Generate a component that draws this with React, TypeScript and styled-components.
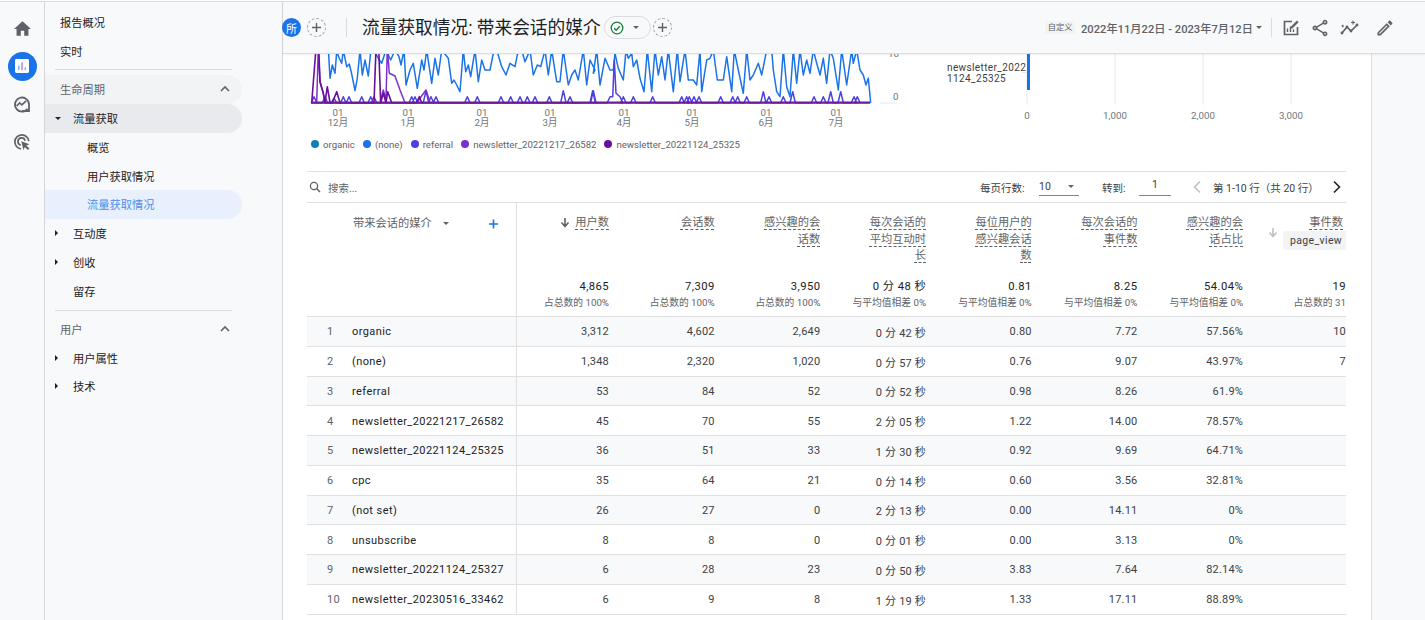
import React from "react";
import styled, { createGlobalStyle } from "styled-components";

const FONT = `Roboto, "Noto Sans CJK SC", "Noto Sans", sans-serif`;

const Global = createGlobalStyle`
  html, body { margin: 0; padding: 0; background: #fff; overflow: hidden; }
  * { box-sizing: border-box; }
  body { font-family: ${FONT}; color: #3c4043; }
`;

const Page = styled.div`
  width: 1425px; height: 620px; padding-top: 1px; overflow: hidden;
`;
const Frame = styled.div`
  display: flex; height: 619px; border-top: 1px solid #dadce0; background: #f8f9fa;
`;
const Rail = styled.aside`
  width: 45px; flex: none; border-right: 1px solid #d4d6da;
  display: flex; flex-direction: column; align-items: center; padding: 9px 0 0 0; gap: 4px;
`;
const RailButton = styled.div<{ $active?: boolean }>`
  width: 30px; height: 34px; display: flex; align-items: center; justify-content: center; 
  & > span { width: 29px; height: 29px; border-radius: 50%; display: flex; align-items: center; justify-content: center;
    background: ${p => (p.$active ? "#1a73e8" : "transparent")}; }
`;
const Nav = styled.nav`
  width: 238px; flex: none; border-right: 1px solid #d4d6da; padding-top: 5.6px;
`;
const NavRow = styled.div<{ $indent: number; $tone?: "group" | "open" | "active"; $sub?: boolean }>`
  width: 197px; height: 28.75px; display: flex; align-items: center;
  padding-left: ${p => p.$indent}px; padding-right: 11px;
  font-size: 11.25px; letter-spacing: 0;
  color: ${p => (p.$tone === "active" ? "#4d8fe8" : p.$sub ? "#5f6368" : "#202124")};
  background: ${p => p.$tone === "group" ? "#f1f3f4" : p.$tone === "open" ? "#e8eaed" : p.$tone === "active" ? "#e8f0fe" : "transparent"};
  border-radius: ${p => (p.$tone ? "0 15px 15px 0" : "0")};
`;
const CaretBox = styled.span`
  width: 20px; flex: none; display: flex; align-items: center; padding-left: 2px;
`;
const CaretDown = styled.i`
  width: 0; height: 0; border-left: 3px solid transparent; border-right: 3px solid transparent; border-top: 3px solid #202124;
`;
const CaretRight = styled.i`
  width: 0; height: 0; border-top: 3.5px solid transparent; border-bottom: 3.5px solid transparent; border-left: 3.5px solid #202124;
`;
const NavRule = styled.div<{ $gap: number; $top: number }>`
  width: 177px; height: 1px; background: #dadce0; margin: ${p => p.$top}px 0 ${p => p.$gap}px 10px;
`;
const Push = styled.span` margin-left: auto; display: flex; `;

const Main = styled.main`
  flex: 1; min-width: 0; display: flex; flex-direction: column;
`;
const Header = styled.header`
  height: 52px; flex: none; display: flex; align-items: center; background: #f8f9fa;
  border-bottom: 1px solid #dadce0; padding: 0 17px 0 0; box-shadow: 0 1px 2px rgba(60,64,67,.08);
  position: relative; z-index: 2;
`;
const Avatar = styled.span`
  width: 19px; height: 19px; border-radius: 50%; background: #1a73e8; color: #fff; font-size: 11px; margin-left: -1px;
  display: flex; align-items: center; justify-content: center; flex: none;
`;
const AddChip = styled.span<{ $left: number }>`
  width: 19px; height: 19px; border-radius: 50%; border: 1px dashed #9aa0a6; margin-left: ${p => p.$left}px; flex: none;
  display: flex; align-items: center; justify-content: center; color: #5f6368;
`;
const VRule = styled.span<{ $left: number; $right: number }>`
  width: 1px; height: 19px; background: #dadce0; flex: none; margin: 0 ${p => p.$right}px 0 ${p => p.$left}px;
`;
const Title = styled.h1`
  font-size: 17.7px; font-weight: 400; margin: 0; color: #202124; white-space: nowrap; line-height: 24px; width: 241px;
`;
const StatusPill = styled.span`
  width: 47px; height: 23px; border: 1px solid #dadce0; border-radius: 12px; margin-left: 1px; flex: none;
  display: flex; align-items: center; padding-left: 5px; gap: 9px;
`;
const TinyCaret = styled.i<{ $c?: string }>`
  width: 0; height: 0; border-left: 3px solid transparent; border-right: 3px solid transparent; border-top: 3px solid ${p => p.$c || "#5f6368"}; flex: none;
`;
const RangeTag = styled.span`
  margin-left: auto; font-size: 8.25px; color: #5f6368; background: #f1f3f4; height: 13px; line-height: 13px; width: 30px; white-space: nowrap; text-align: center;
`;
const DateText = styled.span`
  font-size: 11.2px; font-weight: 500; color: #5f6368; margin: 0 4px 0 6px; white-space: nowrap; width: 171px;
`;
const HeadIcon = styled.span<{ $w: number }>`
  width: ${p => p.$w}px; flex: none; display: flex; justify-content: center; align-items: center; color: #5f6368;
`;

const ContentRow = styled.div`
  flex: 1; min-height: 0; display: flex;
`;
const Body = styled.section`
  width: 1088px; flex: none; background: #fff; padding: 0 25px 0 24px; overflow: hidden;
`;
const Gutter = styled.div`
  flex: 1; border-left: 1px solid #dadce0; background: #f8f9fa;
`;
const ChartSvg = styled.svg`
  display: block; margin-left: -24px; width: 1088px; height: 81px;
`;
const Legend = styled.div`
  display: flex; align-items: center; height: 18px; padding-left: 4px; margin-bottom: 18px;
`;
const LegendItem = styled.span`
  display: flex; align-items: center; font-size: 9.6px; color: #5f6368; margin-right: 8px; white-space: nowrap;
`;
const LegendDot = styled.i<{ $c: string }>`
  width: 8px; height: 8px; border-radius: 50%; background: ${p => p.$c}; margin-right: 4px; flex: none;
`;
const Toolbar = styled.div`
  height: 32px; border-top: 1px solid #e0e0e0; border-bottom: 1px solid #e0e0e0; display: flex; align-items: center; font-size: 10.5px; color: #5f6368;
`;
const SearchIcon = styled.span` display: flex; margin: 0 7px 0 2px; `;
const ToolLabel = styled.span<{ $left?: number; $w?: number }>`
  margin-left: ${p => p.$left ?? 0}px; white-space: nowrap; color: #3c4043; ${p => (p.$w ? `width:${p.$w}px;` : "")}
`;
const SearchLabel = styled.span`
  width: 30px; white-space: nowrap; color: #5f6368;
`;
const PageSelect = styled.span`
  width: 40px; height: 18px; margin-left: 14px; border-bottom: 1px solid #80868b; display: flex; align-items: center; justify-content: space-between; padding: 0 5px 0 0; font-size: 10.5px; color: #3c4043;
`;
const GoInput = styled.span`
  width: 32px; height: 18px; margin-left: 12px; border-bottom: 1px solid #80868b; text-align: center; font-size: 10.5px; line-height: 14px; color: #3c4043;
`;
const ArrowSlot = styled.span<{ $left: number }>` display: flex; margin-left: ${p => p.$left}px; `;

const COLS = "45px 165px 98px repeat(6, 105.7px) 1fr";
const HeadRow = styled.div`
  display: grid; grid-template-columns: ${COLS}; height: 114px; border-bottom: 1px solid #e0e0e0;
`;
const Row = styled.div<{ $odd: boolean }>`
  display: grid; grid-template-columns: ${COLS}; height: 29.75px; align-items: stretch;
  background: ${p => (p.$odd ? "#f8f9fa" : "#fff")}; border-bottom: 1px solid #e0e0e0;
  font-size: 11px; color: #3c4043;
`;
const IndexCell = styled.div`
  padding: 1px 0 0 20px; display: flex; align-items: center; letter-spacing: .3px; color: #5f6368;
`;
const DimCell = styled.div`
  border-right: 1px solid #e0e0e0; padding-top: 1px; display: flex; align-items: center; letter-spacing: .42px; color: #202124; white-space: nowrap; 
`;
const NumCell = styled.div<{ $last?: boolean }>`
  padding: 1px ${p => (p.$last ? 0 : 6)}px 0 0; display: flex; align-items: center; justify-content: flex-end; letter-spacing: .2px; white-space: nowrap;
`;
const DimHead = styled.div`
  border-right: 1px solid #e0e0e0; padding: 13px 17px 0 1px; display: flex; align-items: flex-start; font-size: 11.25px; color: #5f6368; line-height: 16px; white-space: nowrap;
`;
const DimCaret = styled.span` margin: 6px 0 0 11px; display: flex; `;
const MetricHead = styled.div<{ $last?: boolean }>`
  padding: 12px ${p => (p.$last ? 0 : 6)}px 0 0; display: flex; flex-direction: column; align-items: flex-end; position: relative;
`;
const LabelArea = styled.div`
  height: 64px; display: flex; justify-content: flex-end; align-items: flex-start; gap: 5px;
`;
const MetricLabel = styled.span<{ $last?: boolean }>`
  display: block; max-width: 58px; text-align: right; font-size: 11.25px; line-height: 16.5px; color: #5f6368;
  text-decoration: underline dashed #5f6368 1px; text-underline-offset: 2.5px;
  ${p => (p.$last ? "margin-right: 3px;" : "")}
`;
const SortArrow = styled.span` display: flex; margin-top: 2px; `;
const Total = styled.div`
  font-size: 11.25px; font-weight: 400; letter-spacing: .42px; line-height: 16px; color: #202124; white-space: nowrap;
`;
const SubTotal = styled.div`
  font-size: 9.75px; color: #5f6368; line-height: 16px; white-space: nowrap;
`;
const LastLabelWrap = styled.div`
  display: flex; align-items: flex-start; height: 64px; position: relative; width: 100%; justify-content: flex-end;
`;
const Chip = styled.span`
  position: absolute; right: 0; top: 16px; width: 63px; height: 19px; background: #f1f3f4; border-radius: 4px 0 0 4px; font-size: 10.5px; letter-spacing: .35px; color: #3c4043; line-height: 19px; padding-left: 7px; white-space: nowrap;
`;
const LastArrow = styled.span`
  position: absolute; right: 68px; top: 12px; display: flex;
`;

const pts = (base: number, a: number[]) => {
  const out: string[] = [];
  for (let i = 0; i < a.length; i += 2) out.push(`${(base + a[i] / 3).toFixed(1)},${(50 + a[i + 1] / 3).toFixed(1)}`);
  return out;
};
const blueA = [85,-5,90,85,97,45,105,70,110,5,118,25,125,40,130,0,140,50,148,42,155,72,165,122,172,85,180,0,187,75,195,30,205,78,212,5,222,0,232,20,245,40,258,0,272,30,285,0,297,20,303,45,312,0,318,105,330,60,340,40,352,115,365,30,372,60,380,0,395,100,405,25,415,75,425,0,445,25,455,100,462,90,470,105,480,125,490,0,497,65,505,45,512,80,525,0,535,95,545,30,555,60,570,60,580,10,590,0,605,50,618,75,630,40,645,50,655,0,665,0,675,35,690,0,700,75,712,45,722,50,735,0,745,75,755,0,770,95,780,95,790,0,805,105,815,75,825,60,835,90,850,0,860,105,870,30,885,60];
const blueB = [10,70,20,0,30,105,45,25,60,60,70,60,75,10,85,55,100,90,108,0,115,25,125,10,130,50,140,30,150,85,162,125,172,0,185,125,195,0,205,75,215,20,225,90,235,0,250,125,262,0,270,95,285,0,295,90,310,90,320,105,330,0,335,125,350,30,360,25,370,0,382,90,400,90,410,20,425,125,433,0,445,60,460,130,470,0,480,90,490,75,505,40,515,75,530,0,545,0,550,60,560,125,570,140,580,0,590,110,600,140,610,0,620,100,630,0,640,75,650,30,660,70,670,0,680,40,690,75,700,25,710,100,720,0,730,25,745,120,755,0,770,105,785,0,790,40,800,0,810,60,820,75,828,105,835,85,842,158];
const bluePoints = [...pts(300, blueA), ...pts(590, blueB)].join(" ");

const spike = (xs: [number, number][], base: number) => {
  const sorted = [...xs].sort((a, b) => a[0] - b[0]);
  const out: number[] = [];
  sorted.forEach(([x, h]) => out.push(x - 8, 158, x, h, x + 8, 158));
  return pts(base, out);
};
const refA: [number, number][] = [[42,140],[75,140],[102,145],[130,140],[147,140],[185,140],[212,140],[222,140],[335,140],[345,140],[378,122],[393,140],[408,140],[502,140],[532,140],[603,140],[632,140],[660,140],[682,140],[705,140],[748,140],[790,122],[810,140],[880,122]];
const refB: [number, number][] = [[100,140],[130,140],[188,140],[275,140],[290,140],[298,140],[312,140],[327,140],[392,140],[428,140],[443,140],[470,140],[520,125],[537,140],[580,140],[608,125],[672,140],[700,140],[722,125],[752,125],[792,140],[802,140]];
const refMid = pts(590, [0,158,8,122,16,158,52,158,60,140,68,140,73,30,78,130,90,140,98,158]);
const referral = [...spike(refA, 300), ...refMid, ...spike(refB, 590)].join(" ");
const news1 = pts(300, [35,158,50,158,55,-5,60,95,70,130,75,158,240,158,250,120,258,150,262,-5,268,70,285,78,300,120,315,158,350,158,378,120,390,158]).join(" ");
const news2 = pts(300, [35,158,48,-5,56,-5,60,95,70,130,75,158,82,110,90,158,97,158,110,125,120,158,222,158,228,-5,236,-5,242,158,250,130,258,158,263,125,275,158,350,158,358,140,365,158,840,158]).join(" ");

const months = [[338, "12月"], [408, "1月"], [482, "2月"], [550, "3月"], [624, "4月"], [692, "5月"], [766, "6月"], [836, "7月"]] as const;

const Chart = () => (
  <ChartSvg viewBox="283 54 1088 81" fontFamily={FONT}>
    <defs>
      <clipPath id="plot"><rect x="300" y="54" width="590" height="60" /></clipPath>
    </defs>
    <line x1="310" x2="871" y1="103" y2="103" stroke="#dadce0" />
    <line x1="880" x2="897" y1="103" y2="103" stroke="#e8eaed" />
    <g clipPath="url(#plot)" fill="none" strokeLinejoin="round">
      <polyline points={bluePoints} stroke="#1a73e8" strokeWidth="1.5" />
      <polyline points={referral} stroke="#4f3fe0" strokeWidth="1.5" />
      <polyline points={news1} stroke="#7b2fd1" strokeWidth="1.5" />
      <polyline points={news2} stroke="#6a0f9a" strokeWidth="1.6" />
      <line x1="311" x2="870" y1="102.6" y2="102.6" stroke="#6a1b9a" strokeWidth="2.2" />
    </g>
    {months.map(([x, m]) => (
      <g key={m} fontSize="9.75" fill="#70757a" textAnchor="middle">
        <text x={x} y="116">01</text>
        <text x={x} y="126">{m}</text>
      </g>
    ))}
    <text x="888" y="57" fontSize="9.75" fill="#70757a">10</text>
    <text x="893" y="100" fontSize="9.75" fill="#70757a">0</text>
    {[1027, 1115, 1203, 1291].map(x => <line key={x} x1={x} x2={x} y1="54" y2="105" stroke="#e8eaed" />)}
    <rect x="1027" y="54" width="3" height="36" fill="#1a73e8" />
    <line x1="1022" x2="1027" y1="72.5" y2="72.5" stroke="#e8eaed" />
    <g fontSize="10" fill="#3c4043" letterSpacing=".38">
      <text x="947" y="70.5">newsletter_2022</text>
      <text x="947" y="82">1124_25325</text>
    </g>
    <g fontSize="9.75" fill="#70757a" textAnchor="middle">
      <text x="1027" y="119">0</text>
      <text x="1115" y="119">1,000</text>
      <text x="1203" y="119">2,000</text>
      <text x="1291" y="119">3,000</text>
    </g>
  </ChartSvg>
);

const Chevron = () => (
  <svg width="12" height="12" viewBox="0 0 12 12"><path d="M2 8l4-4 4 4" fill="none" stroke="#5f6368" strokeWidth="1.6" /></svg>
);
const Plus = () => (
  <svg width="11" height="11" viewBox="0 0 11 11"><path d="M5.5 1v9M1 5.5h9" stroke="#5f6368" strokeWidth="1.4" /></svg>
);
const Down = ({ c }: { c: string }) => (
  <svg width="10" height="11" viewBox="0 0 10 11"><path d="M5 1v8M1.5 5.5L5 9.5l3.5-4" fill="none" stroke={c} strokeWidth="1.6" /></svg>
);

const rows: [string, string[]][] = [
  ["organic", ["3,312","4,602","2,649","0 分 42 秒","0.80","7.72","57.56%","10"]],
  ["(none)", ["1,348","2,320","1,020","0 分 57 秒","0.76","9.07","43.97%","7"]],
  ["referral", ["53","84","52","0 分 52 秒","0.98","8.26","61.9%",""]],
  ["newsletter_20221217_26582", ["45","70","55","2 分 05 秒","1.22","14.00","78.57%",""]],
  ["newsletter_20221124_25325", ["36","51","33","1 分 30 秒","0.92","9.69","64.71%",""]],
  ["cpc", ["35","64","21","0 分 14 秒","0.60","3.56","32.81%",""]],
  ["(not set)", ["26","27","0","2 分 13 秒","0.00","14.11","0%",""]],
  ["unsubscribe", ["8","8","0","0 分 01 秒","0.00","3.13","0%",""]],
  ["newsletter_20221124_25327", ["6","28","23","0 分 50 秒","3.83","7.64","82.14%",""]],
  ["newsletter_20230516_33462", ["6","9","8","1 分 19 秒","1.33","17.11","88.89%",""]],
];
const metrics = [
  ["用户数", "4,865", "占总数的 100%"],
  ["会话数", "7,309", "占总数的 100%"],
  ["感兴趣的会话数", "3,950", "占总数的 100%"],
  ["每次会话的平均互动时长", "0 分 48 秒", "与平均值相差 0%"],
  ["每位用户的感兴趣会话数", "0.81", "与平均值相差 0%"],
  ["每次会话的事件数", "8.25", "与平均值相差 0%"],
  ["感兴趣的会话占比", "54.04%", "与平均值相差 0%"],
];
const legend: [string, string][] = [["organic", "#0f7fb5"], ["(none)", "#1a73e8"], ["referral", "#4f3fe0"], ["newsletter_20221217_26582", "#7b2fd1"], ["newsletter_20221124_25325", "#6a0f9a"]];

export default function App() {
  return (
    <Page>
      <Global />
      <Frame>
        <Rail>
          <RailButton><span><svg width="17" height="17" viewBox="2 3 20 17"><path d="M10 20v-6h4v6h5v-8h3L12 3 2 12h3v8z" fill="#5f6368" /></svg></span></RailButton>
          <RailButton $active><span>
            <svg width="14" height="14" viewBox="0 0 15 15"><rect width="15" height="15" rx="1.5" fill="#fff" /><rect x="3.2" y="7" width="1.6" height="5" fill="#8ab4f8" /><rect x="6.7" y="3.5" width="1.6" height="8.5" fill="#a78bea" /><rect x="10.2" y="9" width="1.6" height="3" fill="#8ab4f8" /></svg>
          </span></RailButton>
          <RailButton><span>
            <svg width="18" height="18" viewBox="0 0 20 20" fill="none"><path d="M16.2 15.4A7.8 7.8 0 1 1 17.8 10v7.8H10" stroke="#5f6368" strokeWidth="2" /><path d="M4 12.2l3.4-3.4 2.4 2.2 4.8-4.6" stroke="#5f6368" strokeWidth="1.9" /></svg>
          </span></RailButton>
          <RailButton><span>
            <svg width="18" height="18" viewBox="0 0 20 20" fill="none"><path d="M9 17.6A7.8 7.8 0 1 1 17.6 9" stroke="#5f6368" strokeWidth="1.9" /><path d="M8.6 13.4A4 4 0 1 1 13.4 8.6" stroke="#5f6368" strokeWidth="1.9" /><path d="M9.2 9.2l9 3.2-3.4 1.6 3.4 3.2-1.6 1.8-3.4-3.4-1.6 3.6z" fill="#5f6368" /></svg>
          </span></RailButton>
        </Rail>
        <Nav>
          <NavRow $indent={15}>报告概况</NavRow>
          <NavRow $indent={15}>实时</NavRow>
          <NavRule $top={4} $gap={5} />
          <NavRow $indent={15} $tone="group" $sub>生命周期<Push><Chevron /></Push></NavRow>
          <NavRow $indent={8} $tone="open"><CaretBox><CaretDown /></CaretBox>流量获取</NavRow>
          <NavRow $indent={42}>概览</NavRow>
          <NavRow $indent={42}>用户获取情况</NavRow>
          <NavRow $indent={42} $tone="active">流量获取情况</NavRow>
          <NavRow $indent={8}><CaretBox><CaretRight /></CaretBox>互动度</NavRow>
          <NavRow $indent={8}><CaretBox><CaretRight /></CaretBox>创收</NavRow>
          <NavRow $indent={28}>留存</NavRow>
          <NavRule $top={4.5} $gap={4} />
          <NavRow $indent={15} $sub>用户<Push><Chevron /></Push></NavRow>
          <NavRow $indent={8}><CaretBox><CaretRight /></CaretBox>用户属性</NavRow>
          <NavRow $indent={8}><CaretBox><CaretRight /></CaretBox>技术</NavRow>
        </Nav>
        <Main>
          <Header>
            <Avatar>所</Avatar>
            <AddChip $left={6}><Plus /></AddChip>
            <VRule $left={20} $right={15} />
            <Title>流量获取情况: 带来会话的媒介</Title>
            <StatusPill>
              <svg width="14" height="14" viewBox="0 0 14 14" fill="none"><circle cx="7" cy="7" r="5.8" stroke="#188038" strokeWidth="1.3" /><path d="M4.2 7.2l2 2 3.6-4" stroke="#188038" strokeWidth="1.4" /></svg>
              <TinyCaret />
            </StatusPill>
            <AddChip $left={2}><Plus /></AddChip>
            <RangeTag>自定义</RangeTag>
            <DateText>2022年11月22日 - 2023年7月12日</DateText>
            <TinyCaret />
            <VRule $left={9} $right={6} />
            <HeadIcon $w={25}>
              <svg width="18" height="18" viewBox="0 0 18 18" fill="none"><path d="M10 2.5H2.5v13h13V8" stroke="#5f6368" strokeWidth="1.7" /><path d="M5.5 13V9.5M8.5 13V7.5M11.5 13v-2.5" stroke="#5f6368" strokeWidth="1.4" /><path d="M8.8 7.8l6.2-6.2 1.6 1.6-6.2 6.2H8.8z" fill="#5f6368" /></svg>
            </HeadIcon>
            <HeadIcon $w={34}>
              <svg width="20" height="20" viewBox="0 0 24 24"><path fill="#5f6368" d="M18 16.08c-.76 0-1.44.3-1.96.77L8.91 12.7c.05-.23.09-.46.09-.7s-.04-.47-.09-.7l7.05-4.11c.54.5 1.25.81 2.04.81 1.66 0 3-1.34 3-3s-1.34-3-3-3-3 1.34-3 3c0 .24.04.47.09.7L8.04 9.81C7.5 9.31 6.79 9 6 9c-1.66 0-3 1.34-3 3s1.34 3 3 3c.79 0 1.5-.31 2.04-.81l7.12 4.16c-.05.21-.08.43-.08.65 0 1.61 1.31 2.92 2.92 2.92s2.92-1.31 2.92-2.92-1.31-2.92-2.92-2.92zM18 4c.55 0 1 .45 1 1s-.45 1-1 1-1-.45-1-1 .45-1 1-1zM6 13c-.55 0-1-.45-1-1s.45-1 1-1 1 .45 1 1-.45 1-1 1zm12 7.02c-.55 0-1-.45-1-1s.45-1 1-1 1 .45 1 1-.45 1-1 1z" /></svg>
            </HeadIcon>
            <HeadIcon $w={25}>
              <svg width="20" height="18" viewBox="0 0 20 18" fill="none"><path d="M2 14l5-6 4 4 6-6" stroke="#5f6368" strokeWidth="1.7" /><circle cx="2" cy="14" r="1.4" fill="#5f6368" /><circle cx="7" cy="8" r="1.4" fill="#5f6368" /><circle cx="11" cy="12" r="1.4" fill="#5f6368" /><circle cx="17" cy="6" r="1.4" fill="#5f6368" /><path d="M13 1.5v4M11 3.5h4M1.5 7h2.4M2.7 5.8v2.4" stroke="#5f6368" strokeWidth="1.1" /></svg>
            </HeadIcon>
            <HeadIcon $w={46}>
              <svg width="20" height="20" viewBox="0 0 24 24"><path fill="#5f6368" d="M14.06 9.02l.92.92L5.92 19H5v-.92l9.06-9.06M17.66 3c-.25 0-.51.1-.7.29l-1.83 1.83 3.75 3.75 1.83-1.83c.39-.39.39-1.02 0-1.41l-2.34-2.34c-.2-.2-.45-.29-.71-.29zm-3.6 3.19L3 17.25V21h3.75L17.81 9.94l-3.75-3.75z" /></svg>
            </HeadIcon>
          </Header>
          <ContentRow>
            <Body>
              <Chart />
              <Legend>
                {legend.map(([t, c]) => <LegendItem key={t}><LegendDot $c={c} />{t}</LegendItem>)}
              </Legend>
              <Toolbar>
                <SearchIcon><svg width="12" height="12" viewBox="0 0 12 12" fill="none"><circle cx="5" cy="5" r="3.6" stroke="#5f6368" strokeWidth="1.3" /><path d="M7.8 7.8L11 11" stroke="#5f6368" strokeWidth="1.5" /></svg></SearchIcon>
                <SearchLabel>搜索...</SearchLabel>
                <ToolLabel $left={622} $w={45}>每页行数:</ToolLabel>
                <PageSelect>10<TinyCaret $c="#5f6368" /></PageSelect>
                <ToolLabel $left={23} $w={25}>转到:</ToolLabel>
                <GoInput>1</GoInput>
                <ArrowSlot $left={20}><svg width="12" height="14" viewBox="0 0 12 14" fill="none"><path d="M9 1.5L3.5 7 9 12.5" stroke="#bdc1c6" strokeWidth="1.6" /></svg></ArrowSlot>
                <ToolLabel $left={10} $w={110}>第 1-10 行（共 20 行）</ToolLabel>
                <ArrowSlot $left={8}><svg width="12" height="14" viewBox="0 0 12 14" fill="none"><path d="M3 1.5L8.5 7 3 12.5" stroke="#202124" strokeWidth="1.6" /></svg></ArrowSlot>
              </Toolbar>
              <HeadRow>
                <div />
                <DimHead>
                  带来会话的媒介
                  <DimCaret><TinyCaret /></DimCaret>
                  <Push><svg width="11" height="16" viewBox="0 0 11 16"><path d="M5.5 3.5v9M1 8h9" stroke="#1a73e8" strokeWidth="1.6" /></svg></Push>
                </DimHead>
                {metrics.map(([label, total, sub], i) => (
                  <MetricHead key={label}>
                    <LabelArea>
                      {i === 0 && <SortArrow><Down c="#5f6368" /></SortArrow>}
                      <MetricLabel>{label}</MetricLabel>
                    </LabelArea>
                    <Total>{total}</Total>
                    <SubTotal>{sub}</SubTotal>
                  </MetricHead>
                ))}
                <MetricHead $last>
                  <LastLabelWrap>
                    <MetricLabel $last>事件数</MetricLabel>
                    <LastArrow><Down c="#bdc1c6" /></LastArrow>
                    <Chip>page_view</Chip>
                  </LastLabelWrap>
                  <Total>19</Total>
                  <SubTotal>占总数的 31</SubTotal>
                </MetricHead>
              </HeadRow>
              {rows.map(([name, vals], i) => (
                <Row key={name} $odd={i % 2 === 0}>
                  <IndexCell>{i + 1}</IndexCell>
                  <DimCell>{name}</DimCell>
                  {vals.map((v, j) => <NumCell key={j} $last={j === 7}>{v}</NumCell>)}
                </Row>
              ))}
            </Body>
            <Gutter />
          </ContentRow>
        </Main>
      </Frame>
    </Page>
  );
}
